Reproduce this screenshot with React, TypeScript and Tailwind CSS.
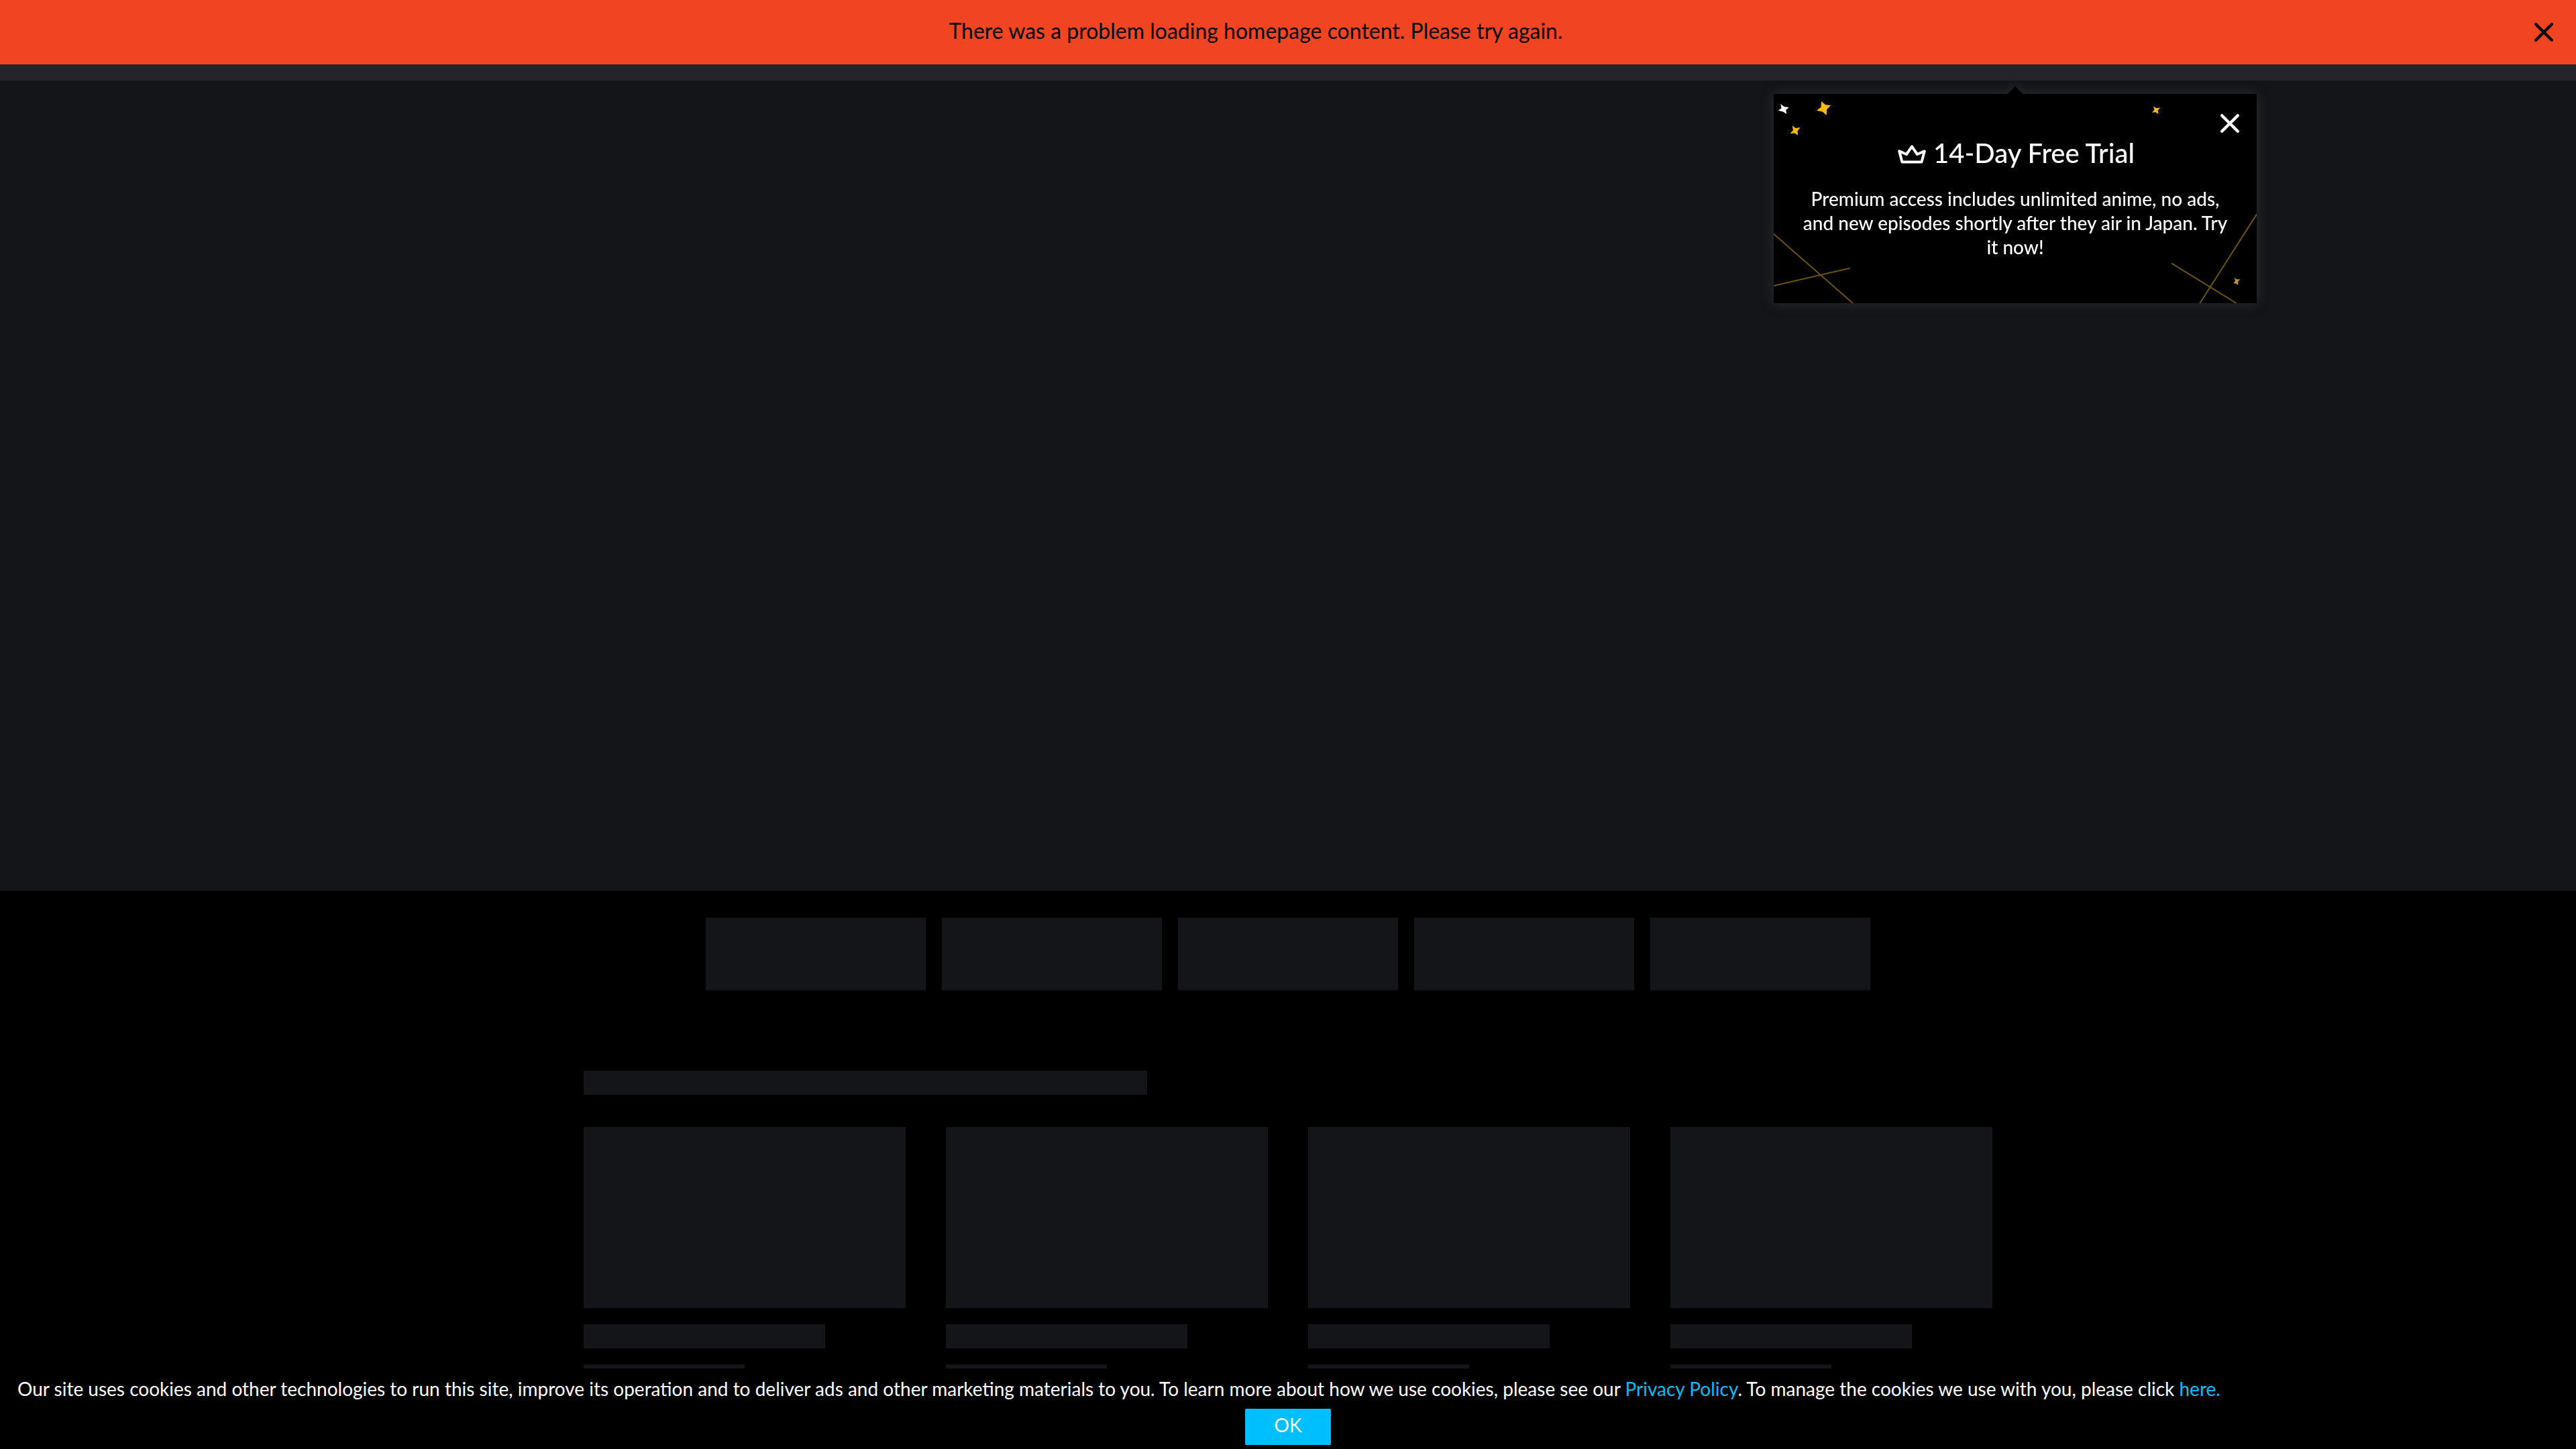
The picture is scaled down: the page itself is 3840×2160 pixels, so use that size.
import React from "react";

function CloseIcon() {
  return (
    <svg viewBox="0 0 48 48" className="size-12" fill="none" stroke="currentColor" strokeWidth="4.4" strokeLinecap="round" aria-hidden="true">
      <path d="M12.2 12.2 35.8 35.8M35.8 12.2 12.2 35.8" />
    </svg>
  );
}

function ErrorBanner() {
  return (
    <div role="alert" className="flex items-center bg-[#f04423] py-6 text-black">
      <p className="flex-1 pb-1 text-center text-[32px] leading-[44px]">
        There was a problem loading homepage content. Please try again.
      </p>
      <button type="button" aria-label="Close message" className="mx-6 cursor-pointer">
        <CloseIcon />
      </button>
    </div>
  );
}

function TrialDecoration() {
  return (
    <svg viewBox="0 0 720 312" className="absolute inset-0 size-full" aria-hidden="true">
      <path d="M10.3 15 15.5 19 22.7 20 18.2 24 19.3 30 14 26.6 6.7 24.7 11.5 21.3Z" fill="#fff" />
      <g fill="#fab818">
        <path d="M71 11 76.8 16 85.3 17.3 79.2 23 78.7 31.7 72.8 26.6 64 24.7 70.5 19.8Z" />
        <path d="M27.7 47.3 32.7 51 39.7 50 35.6 55.2 36 61.7 31.2 58.4 24.3 59 29 54.3Z" />
        <path d="M566 18.3 570.3 21.2 576 20.3 572.6 24.7 573.7 30 569.2 27.3 564 27.7 567.5 23.8Z" />
      </g>
      <path d="M687 274 690.6 276.5 695.3 276 692.4 279.8 692.3 285 689 282.4 685 282.3 688 279Z" fill="#c0933c" />
      <path d="M0 208.7 118 312M0 286 113.7 259.7M720 179.3 635.3 312M593 252.3 689.7 312" stroke="#6a5214" strokeWidth="2" />
    </svg>
  );
}

function CrownIcon() {
  return (
    <svg viewBox="0 0 48 48" className="size-12" fill="none" stroke="currentColor" strokeWidth="4" strokeLinejoin="round" aria-hidden="true">
      <path d="M5.2 21.4 9.5 37.6H38.5L42.8 21.4 32 26 24 14.4 16 26Z" />
    </svg>
  );
}

function TrialPopup() {
  return (
    <aside className="absolute top-5 right-[476px] w-[720px] bg-black px-9 pt-[62px] pb-[66px] text-center text-white drop-shadow-[0_0_8px_#2c2d30]">
      <span className="absolute -top-2 left-1/2 size-4 -translate-x-1/2 rotate-45 bg-black" />
      <TrialDecoration />
      <button type="button" aria-label="Close" className="absolute top-5 right-4 z-10 cursor-pointer">
        <CloseIcon />
      </button>
      <div className="relative flex items-center justify-center gap-2">
        <CrownIcon />
        <h2 className="text-[40px] leading-[52px] font-medium">14-Day Free Trial</h2>
      </div>
      <p className="relative mt-6 text-[28px] leading-9 font-medium">
        Premium access includes unlimited anime, no ads, and new episodes shortly after they air in Japan. Try it now!
      </p>
    </aside>
  );
}

function CookieNotice() {
  return (
    <footer className="fixed inset-x-0 bottom-0 bg-black pb-1.5 text-[28px] text-white">
      <p className="px-[26px] pt-2.5 leading-10">
        Our site uses cookies and other technologies to run this site, improve its operation and to deliver ads and other marketing
        materials to you. To learn more about how we use cookies, please see our{" "}
        <a href="#privacy" className="text-[#00bfff]">Privacy Policy</a>. To manage the cookies we use with you, please click{" "}
        <a href="#cookies" className="text-[#00bfff]">here.</a>
      </p>
      <button type="button" className="mx-auto mt-2.5 block w-32 cursor-pointer rounded-xs bg-[#00bfff] pt-1 pb-2.5 leading-10">
        OK
      </button>
    </footer>
  );
}

export default function App() {
  return (
    <div className="min-h-screen bg-black font-['Lato',sans-serif]">
      <ErrorBanner />
      <header className="h-6 bg-[#23252b]" />
      <main>
        <section className="relative h-[1208px] bg-[#141519]">
          <TrialPopup />
        </section>
        <div className="mx-auto mt-10 grid max-w-[1736px] grid-cols-5 gap-6">
          {[0, 1, 2, 3, 4].map((i) => (
            <div key={i} className="h-[108px] bg-[#141519]" />
          ))}
        </div>
        <section className="mx-auto mt-[120px] max-w-[2100px]">
          <div className="h-9 w-2/5 bg-[#141519]" />
          <div className="mt-12 grid grid-cols-4 gap-[60px]">
            {[0, 1, 2, 3].map((i) => (
              <div key={i} className="flex flex-col gap-6">
                <div className="aspect-video bg-[#141519]" />
                <div className="h-9 w-3/4 bg-[#141519]" />
                <div className="h-9 w-1/2 bg-[#141519]" />
              </div>
            ))}
          </div>
        </section>
      </main>
      <CookieNotice />
    </div>
  );
}
